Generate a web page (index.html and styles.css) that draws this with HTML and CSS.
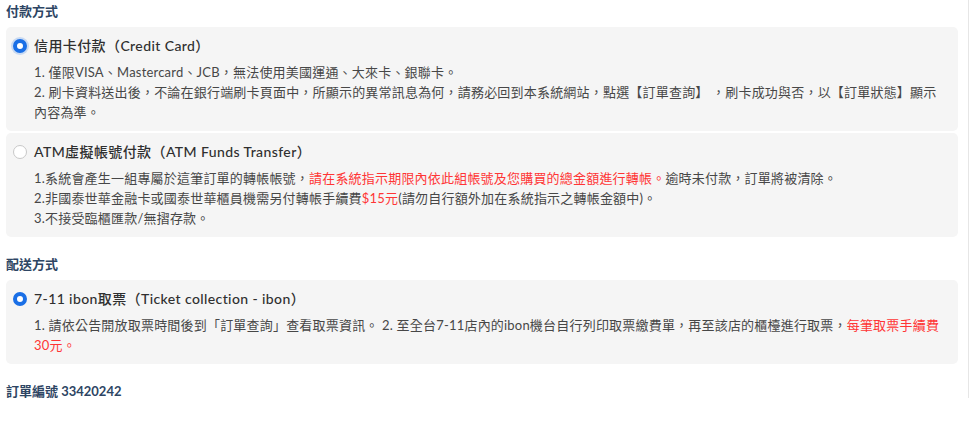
FILE: index.html
```html
<!DOCTYPE html>
<html lang="zh-Hant">
<head>
<meta charset="utf-8">
<title>付款方式</title>
<link rel="stylesheet" href="styles.css">
</head>
<body>
<div class="page">
  <section class="section">
    <h2 class="section-title">付款方式</h2>
    <div class="option-list">
      <div class="option">
        <div class="option-head">
          <span class="radio radio-checked radio-focus"></span>
          <span class="option-title">信用卡付款（Credit Card）</span>
        </div>
        <div class="option-body">
          <p>1. 僅限VISA、Mastercard、JCB，無法使用美國運通、大來卡、銀聯卡。</p>
          <p>2. 刷卡資料送出後，不論在銀行端刷卡頁面中，所顯示的異常訊息為何，請務必回到本系統網站，點選【訂單查詢】 ，刷卡成功與否，以【訂單狀態】顯示內容為準。</p>
        </div>
      </div>
      <div class="option">
        <div class="option-head">
          <span class="radio"></span>
          <span class="option-title">ATM虛擬帳號付款（ATM Funds Transfer）</span>
        </div>
        <div class="option-body">
          <p>1.系統會產生一組專屬於這筆訂單的轉帳帳號，<span class="red">請在系統指示期限內依此組帳號及您購買的總金額進行轉帳。</span>逾時未付款，訂單將被清除。</p>
          <p>2.非國泰世華金融卡或國泰世華櫃員機需另付轉帳手續費<span class="red">$15元</span>(請勿自行額外加在系統指示之轉帳金額中)。</p>
          <p>3.不接受臨櫃匯款/無摺存款。</p>
        </div>
      </div>
    </div>
  </section>

  <section class="section">
    <h2 class="section-title">配送方式</h2>
    <div class="option-list">
      <div class="option">
        <div class="option-head">
          <span class="radio radio-checked"></span>
          <span class="option-title">7-11 ibon取票（Ticket collection - ibon）</span>
        </div>
        <div class="option-body">
          <p>1. 請依公告開放取票時間後到「訂單查詢」查看取票資訊。 2. 至全台7-11店內的ibon機台自行列印取票繳費單，再至該店的櫃檯進行取票，<span class="red">每筆取票手續費30元。</span></p>
        </div>
      </div>
    </div>
  </section>

  <section class="section">
    <h2 class="section-title">訂單編號 33420242</h2>
  </section>
</div>
</body>
</html>
```

FILE: styles.css
```css
html, body {
  margin: 0;
  padding: 0;
  background: #ffffff;
}

body {
  font-family: "Lato", "Noto Sans CJK TC", sans-serif;
  color: #333333;
}

.page {
  position: relative;
  box-sizing: border-box;
  width: 969px;
  padding: 0 11px 0 6px;
}

/* edge of the scroll area on the right */
.page::after {
  content: "";
  position: absolute;
  top: 0;
  right: 0;
  width: 1px;
  height: 398px;
  background: #e6e6e6;
}

.section + .section {
  margin-top: 16px;
}

.section-title {
  margin: 0 0 5px 0;
  font-size: 13px;
  line-height: 22px;
  font-weight: 700;
  color: #2d4563;
}

.option-list {
  display: flex;
  flex-direction: column;
  gap: 2px;
}

.option {
  background: #f5f5f5;
  border-radius: 5px;
  padding: 9px 13px 9px 7px;
}

.option-head {
  display: flex;
  align-items: center;
  gap: 7px;
  height: 20px;
}

.radio {
  box-sizing: border-box;
  flex: none;
  width: 14px;
  height: 14px;
  border-radius: 50%;
  border: 1px solid #c8c8c8;
  background: #ffffff;
}

.radio-checked {
  border: 4px solid #1a6fe6;
}

.radio-focus {
  box-shadow: 0 0 0 2px rgba(26, 111, 230, 0.2);
}

.option-title {
  font-size: 14px;
  line-height: 20px;
  font-weight: 500;
  letter-spacing: 0.4px;
  color: #2f2f2f;
}

.option-body {
  margin-top: 6px;
  padding-left: 21px;
  font-size: 13px;
  line-height: 20px;
  letter-spacing: 0.2px;
  color: #474747;
}

.option-body p {
  margin: 0;
}

.red {
  color: #ff3535;
}
```
